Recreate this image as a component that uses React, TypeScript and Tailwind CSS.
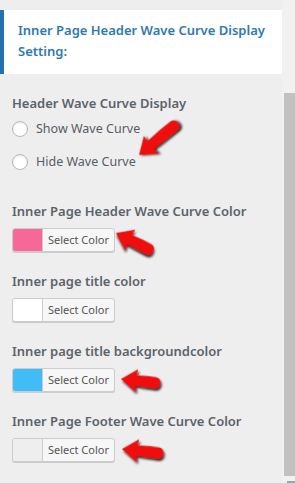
import React from "react";

const font = { fontFamily: '"Noto Sans", "Open Sans", sans-serif' };

function Arrow({ x, y, angle, len }: { x: number; y: number; angle: number; len: number }) {
  const L = len;
  const d = `M0,0 L16,-11.5 L15,-5 Q${L / 2},-6 ${L - 5.5},-5.5 A5.8,5.8 0 0 1 ${L - 5.5},6 Q${L / 2},5.5 15,5 L16,11.5 Z`;
  return (
    <g transform={`translate(${x},${y}) rotate(${angle})`} filter="url(#sh)">
      <path d={d} fill="#f01010" />
    </g>
  );
}

function ColorButton({ color }: { color: string }) {
  return (
    <div className="flex h-[24px] w-[103px] rounded-[3px] border border-[#cccccc] bg-[#f7f7f7] shadow-[0_1px_0_#cccccc] overflow-hidden">
      <div className="w-[30px] h-full border-r border-[#cccccc]" style={{ backgroundColor: color }} />
      <div className="flex-1 flex items-center justify-center text-[11px] text-[#555555]">Select Color</div>
    </div>
  );
}

function Section({ label, color }: { label: string; color: string }) {
  return (
    <div className="flex flex-col">
      <div className="text-[13px] leading-[20px] font-semibold text-[#5b636b]">{label}</div>
      <div className="mt-[7px]">
        <ColorButton color={color} />
      </div>
    </div>
  );
}

export default function App() {
  return (
    <div className="relative w-[295px] h-[483px] bg-[#eeeeee] flex overflow-hidden" style={font}>
      <div className="w-[282px] flex flex-col pt-[10px]">
        <div className="h-[64px] bg-white border-l-4 border-[#2271b1] pl-[14px] pt-[10px]">
          <div className="text-[13px] leading-[21px] font-semibold text-[#2e78b6]">
            Inner Page Header Wave Curve Display Setting:
          </div>
        </div>
        <div className="pl-[12px] pt-[19px] flex flex-col">
          <div className="text-[13px] leading-[20px] font-semibold text-[#5b636b]">Header Wave Curve Display</div>
          <div className="mt-[6px] flex flex-col gap-[13px]">
            {["Show Wave Curve", "Hide Wave Curve"].map((t) => (
              <div key={t} className="flex items-center h-[20px]">
                <div className="w-[16px] h-[16px] rounded-full border border-[#b4b9be] bg-white shadow-[inset_0_1px_2px_rgba(0,0,0,0.1)]" />
                <div className="ml-[8px] text-[12.5px] leading-[20px] text-[#555d66]">{t}</div>
              </div>
            ))}
          </div>
          <div className="mt-[29px] flex flex-col gap-[19px]">
            <Section label="Inner Page Header Wave Curve Color" color="#f76797" />
            <Section label="Inner page title color" color="#ffffff" />
            <Section label="Inner page title backgroundcolor" color="#40bdf7" />
            <Section label="Inner Page Footer Wave Curve Color" color="#eeeeee" />
          </div>
        </div>
      </div>
      <div className="w-[13px] bg-[#f1f1f1] flex flex-col pt-[93px] pl-[2px]">
        <div className="h-[383px] bg-[#c1c1c1]" />
        <div className="mt-[5px] ml-[3px] h-[2px] bg-[#a3a3a3]" />
      </div>
      <svg className="absolute left-0 top-0 pointer-events-none" width="295" height="483" viewBox="0 0 295 483">
        <defs>
          <filter id="sh" x="-50%" y="-50%" width="200%" height="200%">
            <feDropShadow dx="1.5" dy="2" stdDeviation="1.2" floodColor="#000" floodOpacity="0.85" />
          </filter>
        </defs>
        <Arrow x={139} y={155} angle={-40} len={51} />
        <Arrow x={116} y={233} angle={26} len={42} />
        <Arrow x={121} y={379} angle={6} len={40} />
        <Arrow x={122} y={449} angle={6} len={42} />
      </svg>
    </div>
  );
}
